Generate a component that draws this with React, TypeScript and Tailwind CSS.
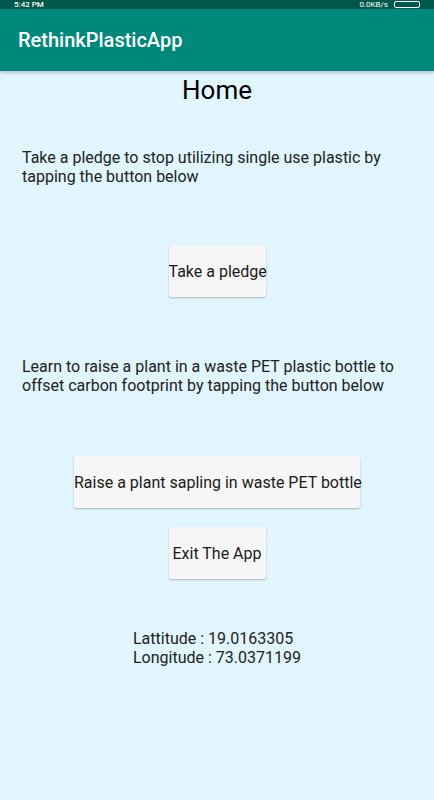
const font = { fontFamily: "Roboto, 'Noto Sans', sans-serif" };

const PlainButton = ({ label, wide }: { label: string; wide?: boolean }) => (
  <button
    className={`h-[52px] px-0 whitespace-nowrap bg-[#f6f6f6] text-[#1b1b1b] text-[16px] leading-[19px] rounded-[2px] shadow-[0_1px_2px_rgba(0,0,0,0.25)] ${
      wide ? "w-[286px]" : "w-[97px]"
    }`}
  >
    {label}
  </button>
);

export default function App() {
  return (
    <div className="min-h-[800px] bg-[#e1f5fe] flex flex-col" style={font}>
      {/* status bar, mostly outside the shot */}
      <div className="h-[9px] bg-[#00574b] flex items-center justify-between px-[14px] overflow-hidden">
        <span className="text-white text-[8px] leading-[8px] font-medium">5:42 PM</span>
        <div className="flex items-center gap-[6px]">
          <span className="text-white text-[8px] leading-[8px]">0.0KB/s</span>
          <div className="w-[26px] h-[7px] border border-white rounded-[2px]" />
        </div>
      </div>

      {/* app bar */}
      <div className="h-[62px] bg-[#00897b] flex items-center px-[18px] shadow-[0_2px_3px_rgba(0,0,0,0.2)] z-10">
        <span className="text-white text-[20px] font-medium">RethinkPlasticApp</span>
      </div>

      <h1 className="mt-[4px] text-center text-[26px] leading-[30px] text-black">Home</h1>

      <p className="mt-[43px] px-[22px] text-[16px] leading-[19px] text-[#222]">
        Take a pledge to stop utilizing single use plastic by tapping the button below
      </p>

      <div className="mt-[59px] flex justify-center">
        <PlainButton label="Take a pledge" />
      </div>

      <p className="mt-[60px] px-[22px] text-[16px] leading-[19px] text-[#222]">
        Learn to raise a plant in a waste PET plastic bottle to offset carbon footprint by tapping the button below
      </p>

      <div className="mt-[61px] flex justify-center">
        <PlainButton label="Raise a plant sapling in waste PET bottle" wide />
      </div>

      <div className="mt-[19px] flex justify-center">
        <PlainButton label="Exit The App" />
      </div>

      <div className="mt-[50px] mx-auto w-fit text-[16px] leading-[19px] text-[#222]">
        <div>Lattitude : 19.0163305</div>
        <div>Longitude : 73.0371199</div>
      </div>
    </div>
  );
}
